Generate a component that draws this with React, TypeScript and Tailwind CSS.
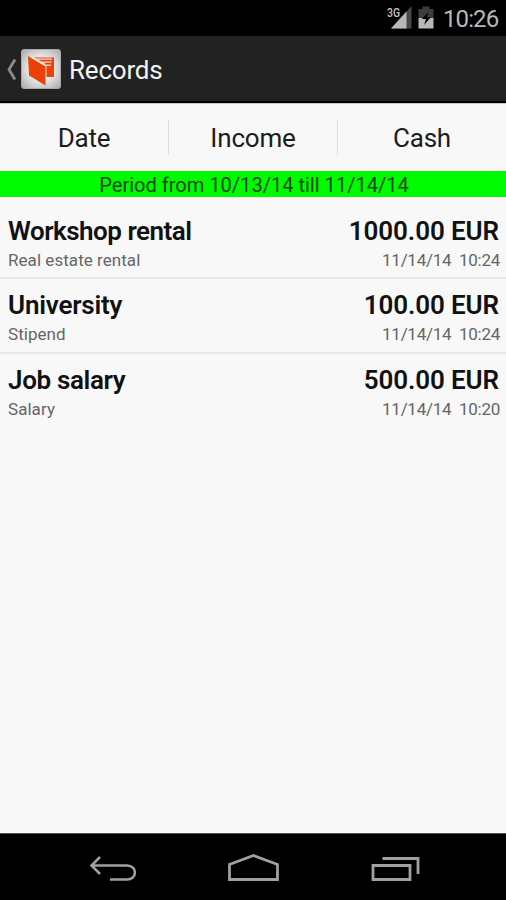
interface IRecord {
  title: string;
  category: string;
  amount: string;
  date: string;
  titleSpacing: string;
}

const records: IRecord[] = [
  {
    title: "Workshop rental",
    category: "Real estate rental",
    amount: "1000.00 EUR",
    date: "11/14/14  10:24",
    titleSpacing: "tracking-[-0.5px]",
  },
  {
    title: "University",
    category: "Stipend",
    amount: "100.00 EUR",
    date: "11/14/14  10:24",
    titleSpacing: "tracking-[-0.2px]",
  },
  {
    title: "Job salary",
    category: "Salary",
    amount: "500.00 EUR",
    date: "11/14/14  10:20",
    titleSpacing: "tracking-[-0.35px]",
  },
];

const StatusBar = () => (
  <div className="flex h-9 shrink-0 items-center justify-end bg-black pr-[7px] text-[#b8b8b8]">
    <svg width="56" height="36" viewBox="0 0 56 36" className="shrink-0">
      <path d="M24.5 6V28.5H4Z" fill="#484848" />
      <path d="M19.5 11.5V28.5H4Z" fill="#b8b8b8" />
      <path d="M13.5 6H0V17H13.5Z" fill="#000" />
      <text x="0" y="16.5" fontSize="12.5" fontWeight="500" fill="#c4c4c4" textLength="13" lengthAdjust="spacingAndGlyphs">
        3G
      </text>
      <path d="M31.5 9h4V6.5h7V9h4v9H31.5Z" fill="#3c3c3c" />
      <path d="M31.5 18h15v10.5H31.5Z" fill="#b8b8b8" />
      <path d="M41.5 12l-6.5 7h4l-2 6 7-8h-4Z" fill="#000" />
    </svg>
    <span className="w-[56px] whitespace-nowrap pt-[2px] text-[24px] leading-9 tracking-[-0.9px]">10:26</span>
  </div>
);

const AppIcon = () => (
  <svg width="40" height="40" viewBox="0 0 40 40" className="shrink-0">
    <defs>
      <radialGradient id="plate" r="0.7">
        <stop offset="0.4" stopColor="#eeeeee" />
        <stop offset="1" stopColor="#a8a8a8" />
      </radialGradient>
    </defs>
    <rect x="0.5" y="0.5" width="39" height="39" rx="2.5" fill="url(#plate)" stroke="#aaa" />
    <path d="M13 8.5H33V28H24V14.5Z" fill="#eb4307" />
    <path d="M13 10.2H31M17.5 13.2H30.5M22 16.2H30" fill="none" stroke="#f5ded5" strokeWidth="1.2" />
    <path d="M7 7L24.5 17.5V36.5L8 26.5Z" fill="#eb4307" />
    <path d="M9 7.5L25 17V28.5" fill="none" stroke="#f3e6e0" strokeWidth="1" />
  </svg>
);

const ActionBar = () => (
  <header className="flex h-[67px] shrink-0 items-center border-b-2 border-black bg-[#222] pl-[6px]">
    <svg width="15" height="24" viewBox="0 0 15 24" className="shrink-0" fill="none">
      <path d="M9 2.5L3 12.5L9 22.5" stroke="#8c8c8c" strokeWidth="2.8" />
    </svg>
    <AppIcon />
    <h1 className="ml-2 pt-[3px] text-[26px] leading-8 tracking-[-0.2px] text-[#f2f2f2]">Records</h1>
  </header>
);

const Filters = () => (
  <div className="flex h-[68px] shrink-0 items-center border-t border-[#c8c8c8] text-center text-[26px] leading-[37px] tracking-[-0.2px] text-[#1c1c1c]">
    <button className="h-[35px] w-[169px] border-r border-[#dedede]">Date</button>
    <button className="h-[35px] w-[169px] border-r border-[#dedede]">Income</button>
    <button className="h-[35px] flex-1">Cash</button>
  </div>
);

const RecordRow = ({ title, category, amount, date, titleSpacing }: IRecord) => (
  <li className="flex h-[74.5px] justify-between border-b-2 border-[#e7e7e7] pl-2 pr-[6px] last:border-b-0">
    <div className="pt-[9px]">
      <p className={`text-[26px] font-semibold leading-[34px] text-[#111] ${titleSpacing}`}>{title}</p>
      <p className="text-[17px] leading-6 tracking-[0.05px] text-[#666]">{category}</p>
    </div>
    <div className="whitespace-pre pt-[9px] text-right">
      <p className="pr-[1px] text-[26px] font-semibold leading-[34px] tracking-[-0.1px] text-[#111]">{amount}</p>
      <p className="text-[17px] leading-6 tracking-[-0.28px] text-[#666]">{date}</p>
    </div>
  </li>
);

const NavigationBar = () => (
  <nav className="flex h-[67px] shrink-0 items-center border-t border-[#555] bg-black pl-[88px] pt-[3px]">
    <svg width="48" height="32" viewBox="0 0 48 32" fill="none" stroke="#a0a0a0" strokeWidth="2.5">
      <path d="M12 4L3.5 12.5L12 21M3.5 12.5H39C49.5 12.5 49.5 26.5 39 26.5H22" />
    </svg>
    <svg width="54" height="32" viewBox="0 0 54 32" fill="none" stroke="#a0a0a0" strokeWidth="2.8" className="ml-[90px]">
      <path d="M3.5 26.5V11.5L27.5 2.5L51.5 11.5V26.5Z" />
    </svg>
    <svg width="50" height="32" viewBox="0 0 50 32" fill="none" stroke="#a0a0a0" strokeWidth="2.8" className="ml-[90px]">
      <path d="M3 12.5H40V26.5H3ZM12.5 5.5H48V21" />
    </svg>
  </nav>
);

export default function App() {
  return (
    <div className="flex h-[900px] w-[506px] flex-col overflow-hidden bg-[#f8f8f8] font-[Roboto,'Liberation_Sans',sans-serif]">
      <StatusBar />
      <ActionBar />
      <Filters />
      <p className="h-[26px] shrink-0 bg-[#00fa00] pl-[2px] pt-[1px] text-center text-[20px] leading-[26px] tracking-[0.02px] text-[#0c480c]">
        Period from 10/13/14 till 11/14/14
      </p>
      <ul className="flex-1 pt-[7.5px]">
        {records.map((record) => (
          <RecordRow key={record.title} {...record} />
        ))}
      </ul>
      <NavigationBar />
    </div>
  );
}
